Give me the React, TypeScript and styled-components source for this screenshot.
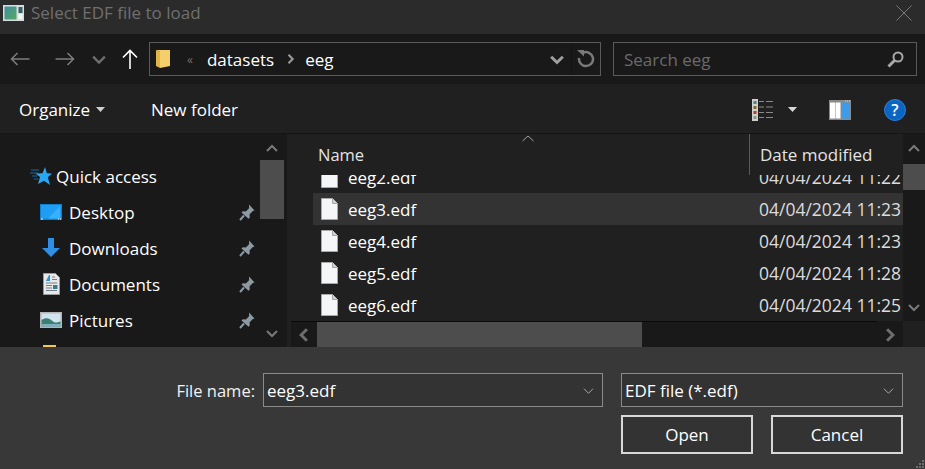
import React from "react";
import styled, { createGlobalStyle } from "styled-components";

const GlobalStyle = createGlobalStyle`
  html, body { margin: 0; padding: 0; background: #202020; overflow: hidden; }
  * { box-sizing: border-box; }
`;

const Dialog = styled.div`
  width: 925px;
  height: 469px;
  display: flex;
  flex-direction: column;
  overflow: hidden;
  font-family: "Open Sans", "Noto Sans", sans-serif;
  font-size: 17px;
  color: #fff;
  background: #202020;
`;

const TitleBar = styled.div`
  height: 34px;
  flex: none;
  display: flex;
  align-items: center;
  gap: 7px;
  padding: 0 13px 9px 3px;
  background: #2b2b2b;
`;

const TitleText = styled.span`
  flex: 1;
  color: #6f6f6f;
  font-size: 17px;
`;

const NavBar = styled.div`
  height: 50px;
  flex: none;
  display: flex;
  align-items: center;
  padding: 0 8px 0 9px;
  background: #191919;
`;

const NavButton = styled.div<{ $w: number; $ml?: number }>`
  width: ${(p) => p.$w}px;
  margin-left: ${(p) => p.$ml ?? 0}px;
  flex: none;
  display: flex;
  justify-content: center;
  align-items: center;
`;

const AddressBox = styled.div`
  width: 452px;
  height: 34px;
  flex: none;
  display: flex;
  align-items: center;
  border: 1px solid #5a5a5a;
  padding-left: 6px;
`;

const Ellipsis = styled.span`
  margin-left: 17px;
  color: #6e6e6e;
  font-size: 12px;
`;

const Crumb = styled.span<{ $gap: number }>`
  margin-left: ${(p) => p.$gap}px;
`;

const CrumbArrow = styled.span`
  margin-left: 12px;
  display: flex;
`;

const Spacer = styled.div`
  flex: 1;
`;

const AddressEnd = styled.div<{ $line?: boolean }>`
  width: 29px;
  height: 100%;
  display: flex;
  align-items: center;
  justify-content: center;
  border-left: ${(p) => (p.$line ? "1px solid #141414" : "none")};
`;

const SearchBox = styled.div`
  width: 304px;
  height: 34px;
  margin-left: 12px;
  flex: none;
  display: flex;
  align-items: center;
  justify-content: space-between;
  border: 1px solid #5a5a5a;
  padding: 0 12px 0 10px;
  color: #6a6a6a;
`;

const Toolbar = styled.div`
  height: 49px;
  flex: none;
  display: flex;
  align-items: center;
  padding: 2px 0 0 19px;
  background: #202020;
`;

const ToolLabel = styled.span<{ $w: number }>`
  width: ${(p) => p.$w}px;
  flex: none;
  display: flex;
  align-items: center;
  gap: 6px;
`;

const ToolIcon = styled.span<{ $w: number }>`
  width: ${(p) => p.$w}px;
  flex: none;
  display: flex;
  align-items: center;
`;

const HelpDot = styled.span`
  width: 22px;
  height: 22px;
  border-radius: 50%;
  background: #0a66c2;
  border: 1px solid #2a80d8;
  display: flex;
  align-items: center;
  justify-content: center;
  font-size: 16px;
  font-weight: 600;
`;

const Body = styled.div`
  height: 214px;
  flex: none;
  display: flex;
  border-top: 1px solid #151515;
`;

const Sidebar = styled.div`
  width: 287px;
  flex: none;
  display: flex;
  background: #191919;
`;

const NavList = styled.div`
  width: 260px;
  flex: none;
  overflow: hidden;
  padding-top: 24px;
`;

const NavRow = styled.div<{ $head?: boolean }>`
  height: 36px;
  display: flex;
  align-items: center;
  padding-left: ${(p) => (p.$head ? 30 : 40)}px;
  gap: ${(p) => (p.$head ? 4 : 7)}px;
`;

const NavIcon = styled.span`
  width: 22px;
  height: 22px;
  flex: none;
  display: flex;
  align-items: center;
  justify-content: center;
`;

const NavText = styled.span`
  flex: 1;
`;

const Pin = styled.span`
  flex: none;
  margin-right: 5px;
  display: flex;
`;

const FolderStub = styled.div`
  width: 13px;
  height: 2px;
  margin: 7px 0 0 43px;
  background: #f2c94c;
`;

const VScroll = styled.div<{ $w: number; $thumbTop: number; $thumbH: number }>`
  width: ${(p) => p.$w}px;
  flex: none;
  position: relative;
  background: #191919;
  display: flex;
  flex-direction: column;
  justify-content: space-between;
  align-items: center;
  padding: 8px 0;

  &::after {
    content: "";
    position: absolute;
    left: 0;
    right: 0;
    top: ${(p) => p.$thumbTop}px;
    height: ${(p) => p.$thumbH}px;
    background: #4d4d4d;
  }
`;

const Main = styled.div`
  flex: 1;
  display: flex;
  flex-direction: column;
  padding-left: 3px;
  min-width: 0;
`;

const MainTop = styled.div`
  height: 187px;
  flex: none;
  display: flex;
`;

const FilePane = styled.div`
  flex: 1;
  min-width: 0;
  display: flex;
  flex-direction: column;
`;

const Header = styled.div`
  height: 41px;
  flex: none;
  display: flex;
  position: relative;
  z-index: 1;
  background: #202020;
  color: #e4e4e4;
`;

const HeaderName = styled.div`
  width: 459px;
  flex: none;
  padding: 9px 0 0 28px;
  position: relative;
  font-size: 16.500px;
`;

const SortCaret = styled.span`
  position: absolute;
  left: 232px;
  top: 1px;
  display: flex;
`;

const HeaderDate = styled.div`
  flex: 1;
  border-left: 1px solid #5a5a5a;
  padding: 9px 0 0 10px;
`;

const Rows = styled.div`
  flex: 1;
  overflow: hidden;
  padding-left: 23px;
`;

const FirstGap = styled.div`
  margin-top: -14px;
`;

const Row = styled.div<{ $selected?: boolean }>`
  height: 32px;
  display: flex;
  align-items: center;
  padding-left: 8px;
  background: ${(p) => (p.$selected ? "#333333" : "transparent")};
`;

const FileName = styled.span`
  width: 421px;
  flex: none;
  padding-left: 10px;
`;

const FileDate = styled.span`
  flex: none;
  white-space: nowrap;
  color: #dcdcdc;
  font-size: 17.500px;
`;

const HScroll = styled.div`
  height: 26px;
  flex: none;
  display: flex;
  align-items: stretch;
  padding-left: 1px;
`;

const HTrack = styled.div`
  width: 612px;
  flex: none;
  display: flex;
  padding-top: 1px;
  background: linear-gradient(#0a0a0a, #0a0a0a) no-repeat 0 0 / 586px 1px, #191919;
`;

const HEnd = styled.div`
  width: 26px;
  flex: none;
  display: flex;
  align-items: center;
  justify-content: center;
`;

const HThumb = styled.div`
  width: 325px;
  flex: none;
  background: #4d4d4d;
`;

const Footer = styled.div`
  flex: 1;
  background: #383838;
  position: relative;
  padding: 26px 22px 0 0;
  display: flex;
  flex-direction: column;
  gap: 8px;
`;

const FieldRow = styled.div`
  display: flex;
  justify-content: flex-end;
  align-items: center;
`;

const Label = styled.span`
  margin-right: 8px;
  color: #f2f2f2;
  font-size: 16.500px;
`;

const Combo = styled.div<{ $w: number; $ml: number }>`
  width: ${(p) => p.$w}px;
  height: 34px;
  margin-left: ${(p) => p.$ml}px;
  flex: none;
  display: flex;
  align-items: center;
  justify-content: space-between;
  border: 1px solid #8a8a8a;
  padding: 0 8px 0 3px;
  background: #333333;
`;

const DialogButton = styled.button<{ $ml?: number }>`
  width: 132px;
  height: 39px;
  margin-left: ${(p) => p.$ml ?? 0}px;
  border: 2px solid #d8d8d8;
  background: #333333;
  color: #fff;
  font: inherit;
  padding: 0;
`;

const Grip = styled.svg`
  position: absolute;
  right: 0;
  bottom: 0;
`;

const Caret = ({ color = "#cfcfcf" }: { color?: string }) => (
  <svg width="9" height="5" viewBox="0 0 9 5"><path d="M0 0h9L4.500 5z" fill={color} /></svg>
);

const Chevron = ({ dir, color = "#7a7a7a", size = 12, sw = 2 }: { dir: "up" | "down" | "left" | "right"; color?: string; size?: number; sw?: number }) => {
  const d = {
    up: "M1 9l5-5 5 5",
    down: "M1 4l5 5 5-5",
    left: "M8.500 1L3.500 6l5 5",
    right: "M3.500 1l5 5-5 5",
  }[dir];
  return (
    <svg width={size} height={size} viewBox="0 0 12 12">
      <path d={d} fill="none" stroke={color} strokeWidth={sw} />
    </svg>
  );
};

const AppIcon = () => (
  <svg width="21" height="16" viewBox="0 0 21 16">
    <defs>
      <linearGradient id="appPanel" x1="0" y1="0" x2="1" y2="1">
        <stop offset="0" stopColor="#3d8fa0" />
        <stop offset="1" stopColor="#58a860" />
      </linearGradient>
    </defs>
    <rect width="21" height="16" fill="#d8dee0" />
    <rect x="1.500" y="1.500" width="12" height="13" fill="url(#appPanel)" />
    <rect x="15.500" y="2" width="4" height="6" fill="#35606a" />
    <rect x="15.500" y="9" width="4" height="5" fill="#f4f6f6" />
  </svg>
);

const FileIcon = () => (
  <svg width="17" height="22" viewBox="0 0 17 22">
    <path d="M.5.5h11l5 5v16H.5z" fill="#f5f6f7" stroke="#a8a8a8" />
    <path d="M11.500.5v5h5" fill="#d0d0d0" stroke="#a8a8a8" />
  </svg>
);

const PinIcon = () => (
  <svg width="16" height="17" viewBox="0 0 16 17">
    <path d="M10 .5l5.500 6-1.700.5-3.300 3.500.3 3-1.300 1.300L2.500 8.500l1.300-1.300 3 .3 3.300-3.300z" fill="#8c9aa3" />
    <path d="M5 11.500L1 16" stroke="#8c9aa3" strokeWidth="2" />
  </svg>
);

const files = [
  { name: "eeg2.edf", date: "04/04/2024 11:22" },
  { name: "eeg3.edf", date: "04/04/2024 11:23", selected: true },
  { name: "eeg4.edf", date: "04/04/2024 11:23" },
  { name: "eeg5.edf", date: "04/04/2024 11:28" },
  { name: "eeg6.edf", date: "04/04/2024 11:25" },
];

const navItems = [
  {
    label: "Desktop",
    icon: (
      <svg width="22" height="16" viewBox="0 0 22 16">
        <rect width="22" height="16" fill="#0f7fd0" />
        <rect x="1" y="1" width="20" height="13.500" fill="#1f9df5" />
        <path d="M8 14.500L20 2v12.500z" fill="#36b2fb" />
        <path d="M1 15h2M18 15h1M20 15h1" stroke="#eaf7ff" />
      </svg>
    ),
  },
  {
    label: "Downloads",
    icon: (
      <svg width="20" height="20" viewBox="0 0 20 20">
        <path d="M7 0h6v10h6l-9 9-9-9h6z" fill="#2f8ee6" />
      </svg>
    ),
  },
  {
    label: "Documents",
    icon: (
      <svg width="17" height="22" viewBox="0 0 17 22">
        <path d="M.5.5h12l4 4v17H.5z" fill="#e8e8e8" stroke="#9a9a9a" />
        <path d="M3 8l3-6h1v6z" fill="#2a90e0" />
        <path d="M9 4h3M9 6.500h5M3 10h11M3 12.500h6M3 15h6M3 17.500h11" stroke="#6f7f8f" />
        <rect x="10" y="12" width="4.500" height="4" fill="#3f7a8a" />
      </svg>
    ),
  },
  {
    label: "Pictures",
    icon: (
      <svg width="22" height="16" viewBox="0 0 22 16">
        <rect width="22" height="16" fill="#b5b5b5" />
        <rect x="1.500" y="1.500" width="19" height="13" fill="#cfe4ee" />
        <path d="M1.500 8c4-3 8-2 11 1s5 1 8 .5v5h-19z" fill="#3e7f74" />
        <path d="M1.500 12h19v2.500h-19z" fill="#7fb0c2" />
      </svg>
    ),
  },
];

export default function App() {
  return (
    <Dialog>
      <GlobalStyle />
      <TitleBar>
        <AppIcon />
        <TitleText>Select EDF file to load</TitleText>
        <svg width="16" height="16" viewBox="0 0 16 16">
          <path d="M.5.5l15 15M15.500.5l-15 15" stroke="#777" fill="none" />
        </svg>
      </TitleBar>

      <NavBar>
        <NavButton $w={22}>
          <svg width="20" height="14" viewBox="0 0 20 14">
            <path d="M19.500 7H1.500M7.500 1l-6 6 6 6" fill="none" stroke="#7e7e7e" strokeWidth="1.500" />
          </svg>
        </NavButton>
        <NavButton $w={46} $ml={11}>
          <svg width="20" height="14" viewBox="0 0 20 14">
            <path d="M.5 7h18M12.500 1l6 6-6 6" fill="none" stroke="#7e7e7e" strokeWidth="1.500" />
          </svg>
        </NavButton>
        <NavButton $w={22}>
          <Chevron dir="down" size={14} color="#6e6e6e" />
        </NavButton>
        <NavButton $w={39}>
          <svg width="16" height="20" viewBox="0 0 16 20">
            <path d="M8 20V2M1 8.500l7-7 7 7" fill="none" stroke="#fff" strokeWidth="1.600" />
          </svg>
        </NavButton>
        <AddressBox>
          <svg width="14" height="20" viewBox="0 0 14 20">
            <path d="M0 1h14v16L4 19V3z" fill="#f4cf6b" />
            <path d="M0 1l4 2v16l-4-2z" fill="#e3b445" />
          </svg>
          <Ellipsis>«</Ellipsis>
          <Crumb $gap={14}>datasets</Crumb>
          <CrumbArrow>
            <svg width="10" height="12" viewBox="0 0 12 12">
              <path d="M3 1l5 5-5 5" fill="none" stroke="#9a9a9a" strokeWidth="2.500" />
            </svg>
          </CrumbArrow>
          <Crumb $gap={9}>eeg</Crumb>
          <Spacer />
          <AddressEnd>
            <Chevron dir="down" size={14} color="#a0a0a0" sw={2.500} />
          </AddressEnd>
          <AddressEnd $line>
            <svg width="18" height="18" viewBox="0 0 18 18">
              <path d="M6 2.800A7 7 0 1 1 2.100 8" fill="none" stroke="#7a7a7a" strokeWidth="2.500" />
              <path d="M0 0h7v6.500z" fill="#7a7a7a" />
            </svg>
          </AddressEnd>
        </AddressBox>
        <SearchBox>
          <span>Search eeg</span>
          <svg width="17" height="17" viewBox="0 0 17 17">
            <circle cx="11" cy="6" r="4.500" fill="none" stroke="#a8a8a8" strokeWidth="2" />
            <path d="M7.500 9.500L1.500 15.500" stroke="#a8a8a8" strokeWidth="3" />
          </svg>
        </SearchBox>
      </NavBar>

      <Toolbar>
        <ToolLabel $w={132}>
          Organize <Caret />
        </ToolLabel>
        <ToolLabel $w={601}>New folder</ToolLabel>
        <ToolIcon $w={36}>
          <svg width="22" height="22" viewBox="0 0 22 22">
            <rect width="6" height="22" fill="#cfcfcf" />
            <rect x="1.500" y="2" width="3" height="3" fill="#3a8a8a" />
            <rect x="1.500" y="7" width="3" height="3" fill="#7a6a2a" />
            <rect x="1.500" y="12" width="3" height="3" fill="#c0392b" />
            <rect x="1.500" y="17" width="3" height="3" fill="#8a9a8a" />
            <path d="M7 2.500h5M14 2.500h7M7 8h5M14 8h7M7 13.500h5M14 13.500h7M7 18.500h5M14 18.500h7" stroke="#8a8a8a" />
          </svg>
        </ToolIcon>
        <ToolIcon $w={41}>
          <Caret color="#d8d8d8" />
        </ToolIcon>
        <ToolIcon $w={55}>
          <svg width="22" height="20" viewBox="0 0 22 20">
            <rect width="22" height="20" fill="#8a8a8a" />
            <rect x="1" y="2.500" width="5" height="16" fill="#fff" />
            <rect x="6.500" y="2.500" width="5" height="16" fill="#fff" />
            <rect x="12" y="2.500" width="9" height="16" fill="#3f9be8" />
            <path d="M16 1h1M18 1h1M20 1h1" stroke="#d8d8d8" />
          </svg>
        </ToolIcon>
        <HelpDot>?</HelpDot>
      </Toolbar>

      <Body>
        <Sidebar>
          <NavList>
            <NavRow $head>
              <NavIcon>
                <svg width="22" height="19" viewBox="0 0 22 19">
                  <path d="M0 6h8M2 9h5M4 12h4M1 3h8" stroke="#146da8" />
                  <path d="M15 0l1.800 6.300 5.200.2-4.200 3.700L20 18l-6-4.300L8 17l2-7-4.500-3.500 7-.2z" fill="#29a8f5" />
                </svg>
              </NavIcon>
              <NavText>Quick access</NavText>
            </NavRow>
            {navItems.map((item) => (
              <NavRow key={item.label}>
                <NavIcon>{item.icon}</NavIcon>
                <NavText>{item.label}</NavText>
                <Pin><PinIcon /></Pin>
              </NavRow>
            ))}
            <FolderStub />
          </NavList>
          <VScroll $w={24} $thumbTop={26} $thumbH={59}>
            <Chevron dir="up" />
            <Chevron dir="down" />
          </VScroll>
        </Sidebar>

        <Main>
          <MainTop>
            <FilePane>
              <Header>
                <HeaderName>
                  Name
                  <SortCaret>
                    <svg width="12" height="7" viewBox="0 0 12 7">
                      <path d="M.5 6L6 1l5.500 5" fill="none" stroke="#a0a0a0" />
                    </svg>
                  </SortCaret>
                </HeaderName>
                <HeaderDate>Date modified</HeaderDate>
              </Header>
              <Rows>
                <FirstGap />
                {files.map((f) => (
                  <Row key={f.name} $selected={f.selected}>
                    <FileIcon />
                    <FileName>{f.name}</FileName>
                    <FileDate>{f.date}</FileDate>
                  </Row>
                ))}
              </Rows>
            </FilePane>
            <VScroll $w={22} $thumbTop={30} $thumbH={26}>
              <Chevron dir="up" />
              <Chevron dir="down" />
            </VScroll>
          </MainTop>
          <HScroll>
            <HTrack>
              <HEnd><Chevron dir="left" size={14} color="#6e6e6e" sw={2.500} /></HEnd>
              <HThumb />
              <Spacer />
              <HEnd><Chevron dir="right" size={14} color="#6e6e6e" sw={2.500} /></HEnd>
            </HTrack>
          </HScroll>
        </Main>
      </Body>

      <Footer>
        <FieldRow>
          <Label>File name:</Label>
          <Combo $w={340} $ml={0}>
            eeg3.edf
            <Chevron dir="down" size={11} color="#b0b0b0" sw={1} />
          </Combo>
          <Combo $w={282} $ml={18}>
            EDF file (*.edf)
            <Chevron dir="down" size={11} color="#b0b0b0" sw={1} />
          </Combo>
        </FieldRow>
        <FieldRow>
          <DialogButton>Open</DialogButton>
          <DialogButton $ml={18}>Cancel</DialogButton>
        </FieldRow>
        <Grip width="12" height="12" viewBox="0 0 12 12">
          <path d="M9 3h2v2H9zM6 6h2v2H6zM9 6h2v2H9zM3 9h2v2H3zM6 9h2v2H6zM9 9h2v2H9z" fill="#6e6e6e" />
        </Grip>
      </Footer>
    </Dialog>
  );
}
